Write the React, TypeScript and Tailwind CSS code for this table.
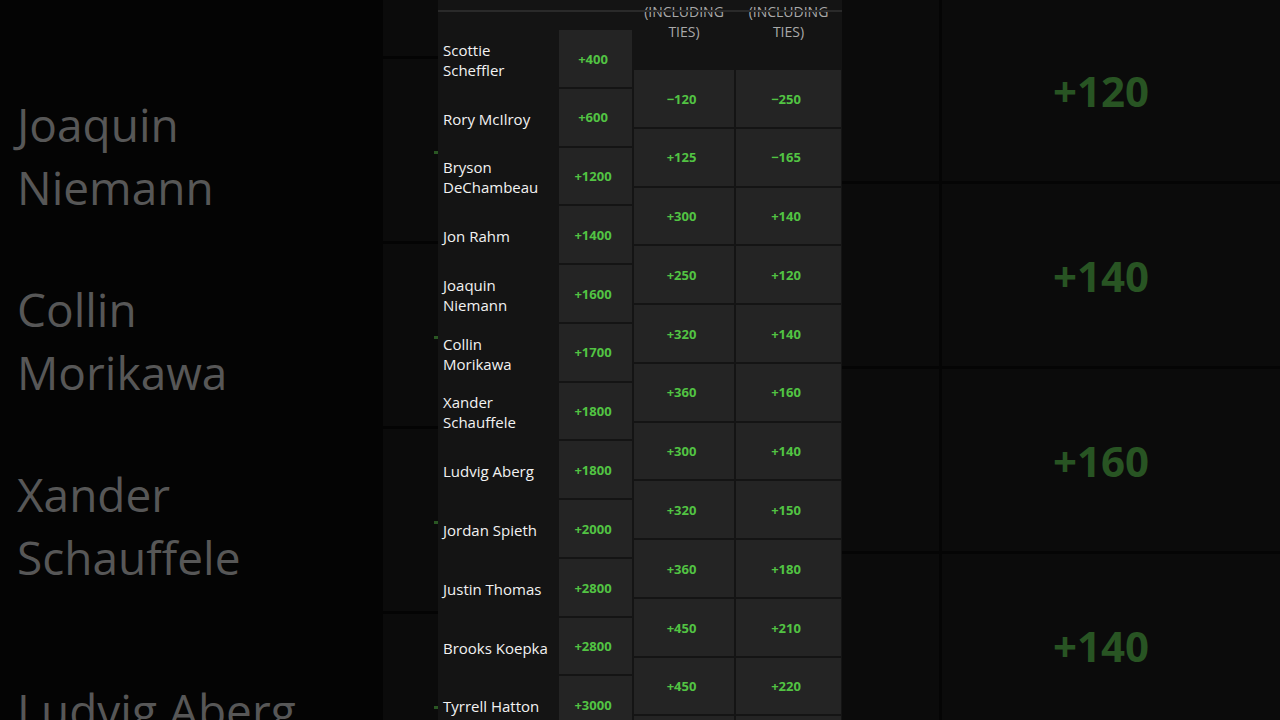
const players = [
  { name: 'Scottie Scheffler', win: '+400' },
  { name: 'Rory McIlroy', win: '+600' },
  { name: 'Bryson DeChambeau', win: '+1200' },
  { name: 'Jon Rahm', win: '+1400' },
  { name: 'Joaquin Niemann', win: '+1600' },
  { name: 'Collin Morikawa', win: '+1700' },
  { name: 'Xander Schauffele', win: '+1800' },
  { name: 'Ludvig Aberg', win: '+1800' },
  { name: 'Jordan Spieth', win: '+2000' },
  { name: 'Justin Thomas', win: '+2800' },
  { name: 'Brooks Koepka', win: '+2800' },
  { name: 'Tyrrell Hatton', win: '+3000' },
];

// top 5 / top 10 columns sit one half-row lower than the win column
const placeOdds = [
  ['−120', '−250'],
  ['+125', '−165'],
  ['+300', '+140'],
  ['+250', '+120'],
  ['+320', '+140'],
  ['+360', '+160'],
  ['+300', '+140'],
  ['+320', '+150'],
  ['+360', '+180'],
  ['+450', '+210'],
  ['+450', '+220'],
  ['', ''],
];

const bgNames = ['Joaquin Niemann', 'Collin Morikawa', 'Xander Schauffele', 'Ludvig Aberg'];
const bgOdds = ['+120', '+140', '+160', '+140'];

const font = { fontFamily: '"Open Sans", "Noto Sans", sans-serif' };

function LeftBackdrop() {
  return (
    <div className="flex h-[720px] w-[438px] shrink-0 overflow-hidden">
      <div className="w-[383px] bg-[#040404] pl-[17px] pt-[63px]">
        {bgNames.map((n) => (
          <div key={n} className="flex h-[185px] w-[330px] items-center text-[46px] leading-[63px] text-[#575757]">
            {n}
          </div>
        ))}
      </div>
      <div className="flex w-[55px] flex-col bg-[#0b0b0b] pt-[56px]">
        {[0, 1, 2, 3].map((i) => (
          <div key={i} className="flex h-[185px] shrink-0 items-center justify-end border-t-[3px] border-[#040404] pt-[4px]">
            <div className="h-[3px] w-[4px] bg-[#2a5723]" />
          </div>
        ))}
      </div>
    </div>
  );
}

function RightBackdrop() {
  return (
    <div className="flex h-[720px] flex-1 flex-col overflow-hidden bg-[#0b0b0b]">
      <div className="-mt-[1px] flex flex-col">
        {bgOdds.map((o, i) => (
          <div key={i} className="flex h-[185px] shrink-0 border-b-[3px] border-[#050505]">
            <div className="w-[100px] shrink-0 border-r-[3px] border-[#050505]" />
            <div className="flex flex-1 items-center pl-[111px] text-[42px] font-bold text-[#285423]">
              {o}
            </div>
          </div>
        ))}
      </div>
    </div>
  );
}

function OddsCell({ value, width }: { value: string; width: string }) {
  return (
    <div className={`flex h-[56.77px] shrink-0 items-center justify-center bg-[#242424] pr-[5px] pt-[2px] text-[13px] font-bold text-[#52c343] ${width}`}>
      {value}
    </div>
  );
}

function Board() {
  return (
    <div className="relative h-[720px] w-[404px] shrink-0 overflow-hidden bg-[#141414]">
      <div className="flex">
        <div className="flex w-[121px] shrink-0 flex-col pt-[30px]">
          {players.map((p) => (
            <div key={p.name} className="flex h-[58.77px] shrink-0 items-center pl-[5px] pr-[8px] pt-[1px] text-[15px] leading-[20px] text-[#f2f2f2]">
              {p.name}
            </div>
          ))}
        </div>
        <div className="flex w-[73px] shrink-0 flex-col gap-[2px] pt-[30px]">
          {players.map((p) => (
            <OddsCell key={p.name} value={p.win} width="w-[73px]" />
          ))}
        </div>
        <div className="ml-[2px] flex flex-col">
          <div className="flex h-[70px] gap-[2px] pt-[2px] text-center text-[14px] leading-[20px] text-[#a9a9a9]">
            <div className="w-[100px]">(INCLUDING<br />TIES)</div>
            <div className="w-[105px]">(INCLUDING<br />TIES)</div>
          </div>
          <div className="flex flex-col gap-[2px]">
            {placeOdds.map((r, i) => (
              <div key={i} className="flex gap-[2px]">
                <OddsCell value={r[0]} width="w-[100px]" />
                <OddsCell value={r[1]} width="w-[105px]" />
              </div>
            ))}
          </div>
        </div>
      </div>
      <div className="absolute left-0 right-0 top-[10px] h-[2px] bg-[#2a2a2a]" />
    </div>
  );
}

export default function App() {
  return (
    <div className="flex h-[720px] w-[1280px] overflow-hidden bg-black" style={font}>
      <LeftBackdrop />
      <Board />
      <RightBackdrop />
    </div>
  );
}
